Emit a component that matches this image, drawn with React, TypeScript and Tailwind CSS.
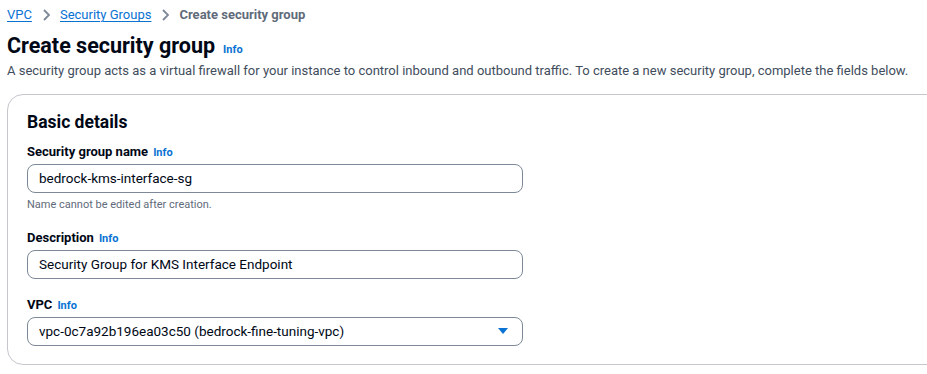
import React from 'react';

const font = { fontFamily: 'Roboto, "Liberation Sans", Arial, sans-serif' };

function Info() {
  return <span className="ml-[5px] text-[11px] font-bold text-[#0972d3]">Info</span>;
}

function Field({ label, value, hint, select }: { label: string; value: string; hint?: string; select?: boolean }) {
  return (
    <div className="flex flex-col">
      <div className="flex items-baseline h-[20px] text-[13px] font-bold text-[#000716]">
        {label}
        <Info />
      </div>
      <div className="mt-[2px] w-[496px] h-[29px] rounded-[8px] border border-[#7d8998] flex items-center justify-between px-[11px] text-[13.5px] text-[#000716]">
        <span>{value}</span>
        {select && (
          <svg width="12" height="8" viewBox="0 0 12 8" className="mr-[2px]">
            <path d="M1 1h10L6 7z" fill="#0972d3" />
          </svg>
        )}
      </div>
      {hint && <div className="mt-[4px] text-[11px] text-[#5f6b7a]">{hint}</div>}
    </div>
  );
}

export default function App() {
  return (
    <div className="w-[927px] h-[374px] bg-white overflow-hidden pl-[7px]" style={font}>
      {/* breadcrumb */}
      <div className="flex items-center h-[30px] text-[13px]">
        <a className="text-[#0972d3] underline underline-offset-2">VPC</a>
        <svg width="10" height="14" viewBox="0 0 10 14" className="mx-[9px]">
          <path d="M3 2l5 5-5 5" stroke="#7d8998" strokeWidth="1.8" fill="none" />
        </svg>
        <a className="text-[#0972d3] underline underline-offset-2">Security Groups</a>
        <svg width="10" height="14" viewBox="0 0 10 14" className="mx-[9px]">
          <path d="M3 2l5 5-5 5" stroke="#7d8998" strokeWidth="1.8" fill="none" />
        </svg>
        <span className="font-bold text-[#5f6b7a]">Create security group</span>
      </div>

      {/* header */}
      <div className="flex items-baseline mt-[2px]">
        <h1 className="text-[21.5px] font-bold text-[#000716] leading-[28px]">Create security group</h1>
        <span className="ml-[8px] text-[11px] font-bold text-[#0972d3]">Info</span>
      </div>
      <p className="text-[13px] text-[#414d5c] leading-[20px] mt-[1px] whitespace-nowrap">
        A security group acts as a virtual firewall for your instance to control inbound and outbound traffic. To create a new security group, complete the fields below.
      </p>

      {/* card */}
      <div className="mt-[13px] w-[960px] h-[271px] rounded-[16px] border border-[#c6c6cd] pl-[19px] pt-[15px]">
        <h2 className="text-[17.5px] font-bold text-[#000716] leading-[24px]">Basic details</h2>
        <div className="mt-[8px]">
          <Field label="Security group name" value="bedrock-kms-interface-sg" hint="Name cannot be edited after creation." />
        </div>
        <div className="mt-[14px]">
          <Field label="Description" value="Security Group for KMS Interface Endpoint" />
        </div>
        <div className="mt-[16px]">
          <Field label="VPC" value="vpc-0c7a92b196ea03c50 (bedrock-fine-tuning-vpc)" select />
        </div>
      </div>
    </div>
  );
}
